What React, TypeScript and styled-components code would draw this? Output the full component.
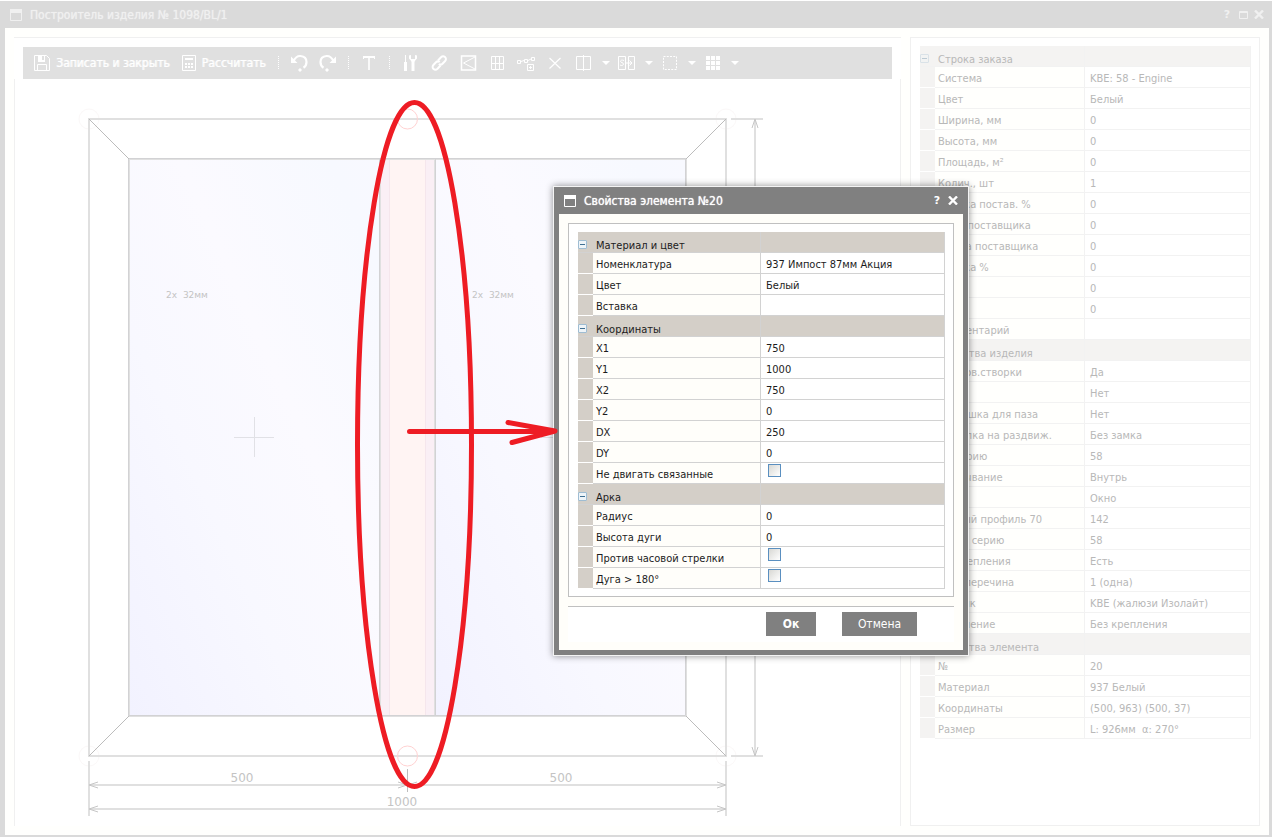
import React from 'react';
import styled, { createGlobalStyle, css } from 'styled-components';

const GlobalStyle = createGlobalStyle`
  *, *::before, *::after { box-sizing: border-box; }
  html, body { margin: 0; padding: 0; background: #fff; }
  body, button, input {
    font-family: "DejaVu Sans Condensed", "DejaVu Sans", sans-serif;
    font-size: 11px;
  }
`;

/* ---------- window chrome ---------- */

const Desktop = styled.div`
  position: relative;
  min-height: 100vh;
  display: flex;
  flex-direction: column;
  padding-top: 1px;
  overflow: hidden;
`;

const MainWindow = styled.section`
  flex: 1;
  display: flex;
  flex-direction: column;
  border: solid #dadada;
  border-width: 0 3px 2px 5px;
`;

const TitleBar = styled.header<{ $faded?: boolean }>`
  display: flex;
  align-items: center;
  height: 27px;
  padding: ${p => (p.$faded ? '0 2px 0 5px' : '0 7px 0 10px')};
  background: ${p => (p.$faded ? '#dadada' : '#808080')};
  color: ${p => (p.$faded ? '#f0f0f0' : '#ffffff')};
`;

const TitleText = styled.h1`
  flex: 1;
  margin: 0 0 0 8px;
  font-size: 12px;
  line-height: 16px;
  font-weight: normal;
  text-shadow: 0 0 1px currentColor;
  white-space: nowrap;
`;

const WindowButton = styled.button`
  display: flex;
  align-items: center;
  justify-content: center;
  width: 16px;
  height: 16px;
  padding: 0;
  border: 0;
  background: none;
  color: inherit;
  font-family: "DejaVu Sans", sans-serif;
  font-weight: bold;
  line-height: 16px;
`;

const WindowBody = styled.div`
  flex: 1;
  display: grid;
  grid-template-columns: minmax(0, 1fr) 350px;
  gap: 9px;
  padding: 9px;
  background: #fffffd;
`;

const Editor = styled.main`
  display: flex;
  flex-direction: column;
  border-top: 1px solid #f0f0f0;
  background: #fff;
`;

const Sheet = styled.div`
  flex: 1;
  border: solid #f0f0f0;
  border-width: 0 1px;
  overflow: hidden;
  svg { display: block; }
`;

const SidePanel = styled.aside`
  border: 1px solid #f0f0f0;
  padding: 8px 8px 8px 9px;
  background: #fff;
`;

/* ---------- toolbar ---------- */

const Toolbar = styled.div`
  display: flex;
  align-items: center;
  height: 32px;
  margin: 9px 9px 0;
  padding: 0 6px;
  background: #e0e0e0;
  color: #fff;
`;

const TextTool = styled.button`
  display: flex;
  align-items: center;
  gap: 6px;
  height: 24px;
  padding: 0 7px 0 5px;
  border: 0;
  background: none;
  color: inherit;
  font-size: 12px;
  white-space: nowrap;
  text-shadow: 1px 0 0 rgba(255, 255, 255, 0.7);
`;

const IconTool = styled.button<{ $narrow?: boolean }>`
  display: flex;
  align-items: center;
  justify-content: center;
  flex: none;
  width: ${p => (p.$narrow ? 14 : 29)}px;
  height: 24px;
  padding: 0;
  border: 0;
  background: none;
  color: inherit;
`;

const Separator = styled.span`
  flex: none;
  width: 12px;
  &::before {
    content: "";
    display: block;
    width: 1px;
    height: 14px;
    margin-left: 5px;
    background: repeating-linear-gradient(#fff 0 1px, #e0e0e0 1px 2px);
  }
`;

/* ---------- property grid ---------- */

type Tone = 'faded' | 'normal';
const tones = {
  faded: { line: '#f2f2f2', group: '#f4f3f2', label: '#fffffd', text: '#b8b8b8' },
  normal: { line: '#d2d2d2', group: '#d4cfc8', label: '#fffefa', text: '#1c1c1c' },
};

const Grid = styled.table<{ $tone: Tone }>`
  width: 100%;
  table-layout: fixed;
  border-collapse: separate;
  border-spacing: 0;
  line-height: 13px;
  color: ${p => tones[p.$tone].text};
  --line: ${p => tones[p.$tone].line};
  --group: ${p => tones[p.$tone].group};
  --label: ${p => tones[p.$tone].label};
`;

const GutterCol = styled.col`width: 15px;`;
const LabelCol = styled.col<{ $width: number }>`width: ${p => p.$width}px;`;

const cell = css`
  height: 21px;
  padding: 2px 0 0;
  text-align: left;
  font-weight: normal;
  white-space: nowrap;
  overflow: hidden;
  border-bottom: 1px solid var(--line);
`;

const Gutter = styled.td`
  ${cell}
  background: var(--group);
  border-bottom-color: #fff;
`;

const Label = styled.th`
  ${cell}
  padding-left: 3px;
  background: var(--label);
  border-right: 1px solid var(--line);
`;

const Value = styled.td`
  ${cell}
  padding-left: 5px;
  border-right: 1px solid var(--line);
`;

const GroupCell = styled.th`
  ${cell}
  padding: 7px 0 0 3px;
  background: var(--group);
  border-right: 1px solid var(--line);
`;

const GroupToggleCell = styled.td`
  ${cell}
  padding-top: 5px;
  background: var(--group);
`;

const Toggle = styled.button<{ $tone: Tone }>`
  display: block;
  width: 9px;
  height: 9px;
  padding: 0;
  border: 1px solid #9fbdd3;
  border-radius: 1px;
  background: #eef4f8;
  opacity: ${p => (p.$tone === 'faded' ? 0.3 : 1)};
  &::before {
    content: "";
    display: block;
    width: 5px;
    height: 1px;
    margin: 0 auto;
    background: #3f6f92;
  }
`;

const Tick = styled.input`
  appearance: none;
  display: block;
  width: 13px;
  height: 13px;
  margin: 0 0 5px 2px;
  border: 1px solid #5a8fc0;
  background: linear-gradient(135deg, #d8d8d4, #ffffff);
`;

type Row = { label: string; value?: string; tick?: boolean };
type Group = { title: string; rows: Row[] };

function PropertyGrid({ groups, tone, labelWidth }: { groups: Group[]; tone: Tone; labelWidth: number }) {
  return (
    <Grid $tone={tone}>
      <colgroup>
        <GutterCol />
        <LabelCol $width={labelWidth} />
        <col />
      </colgroup>
      {groups.map((g, gi) => (
        <tbody key={g.title}>
          <tr>
            <GroupToggleCell>
              <Toggle $tone={tone} type="button" aria-label={`Свернуть: ${g.title}`} />
            </GroupToggleCell>
            <GroupCell scope="rowgroup">{g.title}</GroupCell>
            <GroupCell as="td" />
          </tr>
          {g.rows.map((r, i) => {
            const id = `${tone}-${gi}-${i}`;
            return (
              <tr key={id}>
                <Gutter />
                <Label scope="row">{r.tick ? <label htmlFor={id}>{r.label}</label> : r.label}</Label>
                {r.tick ? (
                  <TickCell><Tick type="checkbox" id={id} /></TickCell>
                ) : (
                  <Value>{r.value}</Value>
                )}
              </tr>
            );
          })}
        </tbody>
      ))}
    </Grid>
  );
}

const TickCell = styled(Value)`
  padding-top: 0;
`;

const orderGroups: Group[] = [
  {
    title: 'Строка заказа',
    rows: [
      { label: 'Система', value: 'KBE: 58 - Engine' },
      { label: 'Цвет', value: 'Белый' },
      { label: 'Ширина, мм', value: '0' },
      { label: 'Высота, мм', value: '0' },
      { label: 'Площадь, м²', value: '0' },
      { label: 'Колич., шт', value: '1' },
      { label: 'Скидка постав. %', value: '0' },
      { label: 'Цена поставщика', value: '0' },
      { label: 'Сумма поставщика', value: '0' },
      { label: 'Скидка %', value: '0' },
      { label: 'Цена', value: '0' },
      { label: 'Итог', value: '0' },
      { label: 'Комментарий', value: '' },
    ],
  },
  {
    title: 'Свойства изделия',
    rows: [
      { label: 'Микров.створки', value: 'Да' },
      { label: 'Паз', value: 'Нет' },
      { label: 'Заглушка для паза', value: 'Нет' },
      { label: 'Защелка на раздвиж.', value: 'Без замка' },
      { label: 'На серию', value: '58' },
      { label: 'Открывание', value: 'Внутрь' },
      { label: 'Тип', value: 'Окно' },
      { label: 'Старый профиль 70', value: '142' },
      { label: 'Через серию', value: '58' },
      { label: 'На крепления', value: 'Есть' },
      { label: 'Есть перечина', value: '1 (одна)' },
      { label: 'Датчик', value: 'KBE (жалюзи Изолайт)' },
      { label: 'Крепление', value: 'Без крепления' },
    ],
  },
  {
    title: 'Свойства элемента',
    rows: [
      { label: '№', value: '20' },
      { label: 'Материал', value: '937 Белый' },
      { label: 'Координаты', value: '(500, 963) (500, 37)' },
      { label: 'Размер', value: 'L: 926мм \u00a0α: 270°' },
    ],
  },
];

const elementGroups: Group[] = [
  {
    title: 'Материал и цвет',
    rows: [
      { label: 'Номенклатура', value: '937 Импост 87мм Акция' },
      { label: 'Цвет', value: 'Белый' },
      { label: 'Вставка', value: '' },
    ],
  },
  {
    title: 'Координаты',
    rows: [
      { label: 'X1', value: '750' },
      { label: 'Y1', value: '1000' },
      { label: 'X2', value: '750' },
      { label: 'Y2', value: '0' },
      { label: 'DX', value: '250' },
      { label: 'DY', value: '0' },
      { label: 'Не двигать связанные', tick: true },
    ],
  },
  {
    title: 'Арка',
    rows: [
      { label: 'Радиус', value: '0' },
      { label: 'Высота дуги', value: '0' },
      { label: 'Против часовой стрелки', tick: true },
      { label: 'Дуга > 180°', tick: true },
    ],
  },
];

/* ---------- dialog ---------- */

const Dialog = styled.section`
  position: absolute;
  left: 553px;
  top: 186px;
  width: 416px;
  border: 1px solid #f4f4f4;
  background: #808080;
  box-shadow: 0 0 7px rgba(0, 0, 0, 0.45);
`;

const DialogBody = styled.div`
  margin: 0 5px 5px;
  padding: 9px 9px 8px;
  background: #fffefa;
`;

const DialogPanel = styled.div`
  padding: 8px 8px 7px 9px;
  border: 1px solid #c0c0c0;
  background: #fff;
`;

const DialogFooter = styled.footer`
  display: flex;
  justify-content: flex-end;
  gap: 26px;
  margin-top: 9px;
  padding: 5px 37px 6px 0;
  border-top: 1px solid #c0c0c0;
  background: #fff;
`;

const DialogButton = styled.button<{ $primary?: boolean }>`
  width: ${p => (p.$primary ? 50 : 75)}px;
  height: 24px;
  padding: 0;
  border: 0;
  background: #808080;
  color: #fff;
  font-size: 12px;
  font-weight: ${p => (p.$primary ? 'bold' : 'normal')};
`;

const Annotation = styled.svg`
  position: absolute;
  left: 350px;
  top: 95px;
  pointer-events: none;
`;

/* ---------- icons ---------- */

const WindowIcon = () => (
  <svg width="12" height="12" viewBox="0 0 12 12" aria-hidden="true">
    <path d="M.5 .5h11v11H.5z" fill="none" stroke="currentColor" />
    <path d="M0 0h12v4H0z" fill="currentColor" />
  </svg>
);

const CloseIcon = () => (
  <svg width="10" height="9" viewBox="0 0 10 9" aria-hidden="true">
    <path d="M1 .5l8 8M9 .5l-8 8" stroke="currentColor" strokeWidth="2.4" fill="none" />
  </svg>
);

const MaximizeIcon = () => (
  <svg width="9" height="8" viewBox="0 0 9 8" aria-hidden="true">
    <path d="M.5 .5h8v7h-8zM0 1.5h9" stroke="currentColor" fill="none" />
  </svg>
);

const SaveIcon = () => (
  <svg width="16" height="16" viewBox="0 0 16 16" aria-hidden="true" fill="none" stroke="currentColor">
    <path d="M.5 .5h12l3 3v12H.5z" />
    <path d="M3.5 15.5v-6h9v6" />
    <path d="M4 1h7v6H4z" fill="currentColor" stroke="none" />
    <path d="M8 1h2v4H8z" fill="#e0e0e0" stroke="none" />
  </svg>
);

const CalcIcon = () => (
  <svg width="14" height="16" viewBox="0 0 14 16" aria-hidden="true">
    <path d="M.5 .5h13v15H.5z" fill="none" stroke="currentColor" />
    <path d="M3 3h8v2H3zM3 8h2v2H3zM6 8h2v2H6zM9 8h2v2H9zM3 11h2v2H3zM6 11h2v2H6zM9 11h2v2H9z" fill="currentColor" />
  </svg>
);

const Icon = ({ children }: { children: React.ReactNode }) => (
  <svg width="21" height="20" viewBox="0 0 21 20" fill="none" stroke="currentColor" aria-hidden="true">
    {children}
  </svg>
);

const Undo = () => (
  <Icon>
    <path d="M4.500 8C6.500 4 9 2.800 11.500 3c4 .3 6 3 6 6 0 2.500-1 4.500-3 5.700" strokeWidth="2.200" />
    <path d="M2 3.500V10h6.500z" fill="currentColor" stroke="none" />
    <path d="M11 15l2 2-2 2-2-2z" fill="currentColor" stroke="none" />
  </Icon>
);
const Redo = () => (
  <Icon>
    <path d="M15.500 8C13.500 4 11 2.800 8.500 3c-4 .3-6 3-6 6 0 2.500 1 4.500 3 5.700" strokeWidth="2.200" />
    <path d="M18 3.500V10h-6.500z" fill="currentColor" stroke="none" />
    <path d="M9 15l2 2-2 2-2-2z" fill="currentColor" stroke="none" />
  </Icon>
);
const TextIcon = () => (
  <Icon>
    <path d="M4 4h12" strokeWidth="2" />
    <path d="M10 4v13" strokeWidth="1.600" />
    <path d="M4.500 3v3M15.500 3v3" />
  </Icon>
);
const Tools = () => (
  <Icon>
    <path d="M5.500 2v8" />
    <path d="M5.500 9v9" strokeWidth="3" />
    <path d="M13 8v10" strokeWidth="3" />
    <path d="M9 2.500v3L12 9h2l3-3.500v-3l-2-.5v4h-4V2z" fill="currentColor" stroke="none" />
  </Icon>
);
const LinkIcon = () => (
  <Icon>
    <path d="M9 7.500l3-3.200c1.200-1.200 2.800-1.300 4-.3s1.200 2.800.1 4l-2.600 2.700c-1.100 1.100-2.600 1.100-3.700.3" strokeWidth="2" />
    <path d="M11.500 12.500l-3 3.200c-1.200 1.200-2.800 1.300-4 .3s-1.200-2.800-.1-4L7 9.300c1.100-1.100 2.600-1.100 3.700-.3" strokeWidth="2" />
  </Icon>
);
const Sash = () => (
  <Icon>
    <path d="M3.500 3h14v14h-14z" strokeWidth="1.500" />
    <path d="M17 4L5.500 10 17 16" />
  </Icon>
);
const Layout = () => (
  <Icon>
    <path d="M4.500 3.500h12v13h-12zM8.500 4v12M12.500 4v12M4 10.500h12" />
  </Icon>
);
const Nodes = () => (
  <Icon>
    <path d="M1.500 7.500h3v3h-3zM8.500 6.500h3v3h-3zM15.500 4.500h3v3h-3zM5 8.500L8 7.500M12 7.500l3-1.500" />
    <path d="M11.500 11.500h6v6h-6zM14.500 13v3M13 14.500h3" />
  </Icon>
);
const Cross = () => (
  <Icon>
    <path d="M4.500 5l11 10.500M15.500 5l-11 10.500" strokeWidth="1.200" />
  </Icon>
);
const Split = () => (
  <Icon>
    <path d="M2.500 3.500h14v13h-14zM9.500 2v16" />
  </Icon>
);
const Merge = () => (
  <Icon>
    <path d="M1.500 3.500h7v13h-7zM11.500 3.500h6v13h-6z" />
    <path d="M7 7.500C4.500 6.500 3.500 7.500 3.500 8.500s3 1 3 2.500-2 2-3.500 1M8 10h7M12.500 7.500l2.500 2.500-2.500 2.500" />
  </Icon>
);
const Marquee = () => (
  <Icon>
    <path d="M3.500 3.500h13v13h-13z" strokeDasharray="2 1.250" />
  </Icon>
);
const Tiles = () => (
  <Icon>
    <path d="M3 3h4v4H3zM8 3h4v4H8zM13 3h4v4h-4zM3 8h4v4H3zM8 8h4v4H8zM13 8h4v4h-4zM3 13h4v4H3zM8 13h4v4H8zM13 13h4v4h-4z" fill="currentColor" stroke="none" />
  </Icon>
);
const Caret = () => (
  <svg width="8" height="4" viewBox="0 0 8 4" aria-hidden="true">
    <path d="M0 0h8L4 4z" fill="currentColor" />
  </svg>
);

const plainTools = [
  ['Инструменты', Tools],
  ['Связь', LinkIcon],
  ['Створка', Sash],
  ['Раскладка', Layout],
  ['Узлы', Nodes],
  ['Удалить', Cross],
] as const;

const menuTools = [
  ['Разделить', Split],
  ['Объединить', Merge],
  ['Выделить', Marquee],
  ['Сетка', Tiles],
] as const;

/* ---------- drawing ---------- */

const Drawing = () => (
  <svg width="885" height="745" viewBox="15 79 885 745" role="img" aria-label="Чертёж изделия" fill="none">
    <defs>
      <linearGradient id="glass" x1="0" y1="1" x2="1" y2="0">
        <stop offset="0" stopColor="#f2f2ff" />
        <stop offset="0.35" stopColor="#f8f8ff" />
        <stop offset="0.6" stopColor="#fbfaff" />
        <stop offset="0.9" stopColor="#f7f9ff" />
        <stop offset="1" stopColor="#f8f9ff" />
      </linearGradient>
    </defs>
    <rect x="129" y="159" width="251" height="557" fill="url(#glass)" />
    <rect x="435" y="159" width="251" height="557" fill="url(#glass)" />
    <rect x="380" y="159" width="55" height="557" fill="#faeff5" />
    <rect x="390" y="159" width="35" height="557" fill="#fff4f3" />
    <path d="M389.500 160v556M425.500 160v556" stroke="#f5e6ec" />
    <g stroke="#fbf8f8">
      <circle cx="89" cy="119" r="10" />
      <circle cx="726" cy="119" r="10" />
      <circle cx="89" cy="756" r="10" />
      <circle cx="726" cy="756" r="10" />
    </g>
    <g stroke="#e0e0e0" strokeWidth="2">
      <rect x="89" y="119" width="637" height="637" />
      <rect x="129" y="159" width="557" height="557" />
      <path d="M380 159v557M435 159v557" />
      <path d="M731 119h32M731 756h32M755 119v637" />
      <path d="M89 761v55M726 761v55M89 785h637M89 809h637" />
    </g>
    <path d="M128.500 158.500h557v557h-557zM435.500 159v557M379.500 159v557" stroke="#d2d2d4" />
    <path d="M89 119l40 40M726 119l-40 40M89 756l40-40M726 756l-40-40" stroke="#bcbcbc" />
    <path d="M407.500 769v23" stroke="#bdbdbd" />
    <path
      d="M98 782l-9 3 9 3M398 782l9 3-9 3M417 782l-9 3 9 3M717 782l9 3-9 3M98 806l-9 3 9 3M717 806l9 3-9 3M752 128l3-9 3 9M752 747l3 9 3-9"
      stroke="#c6c6c6"
    />
    <path d="M234 437.500h40M254.500 417v40M541 437.500h40M561.500 417v40" stroke="#e1e1e6" />
    <g stroke="#ffd2d2">
      <circle cx="407.500" cy="119" r="10" />
      <circle cx="407.500" cy="756" r="10" />
    </g>
    <g fill="#c4c4c4" fontFamily='"DejaVu Sans", sans-serif' fontSize="12" textAnchor="middle">
      <text x="242" y="782">500</text>
      <text x="561" y="782">500</text>
      <text x="402" y="806">1000</text>
      <text x="187" y="298" fontSize="9">2x{'\u00a0\u00a0'}32мм</text>
      <text x="493" y="298" fontSize="9">2x{'\u00a0\u00a0'}32мм</text>
    </g>
  </svg>
);

export default function App() {
  return (
    <>
      <GlobalStyle />
      <Desktop>
        <MainWindow>
          <TitleBar $faded>
            <WindowIcon />
            <TitleText>Построитель изделия № 1098/BL/1</TitleText>
            <WindowButton type="button" aria-label="Справка">?</WindowButton>
            <WindowButton type="button" aria-label="Развернуть"><MaximizeIcon /></WindowButton>
            <WindowButton type="button" aria-label="Закрыть"><CloseIcon /></WindowButton>
          </TitleBar>
          <WindowBody>
            <Editor>
              <Toolbar role="toolbar">
                <TextTool type="button"><SaveIcon />Записать и закрыть</TextTool>
                <TextTool type="button"><CalcIcon />Рассчитать</TextTool>
                <Separator />
                <IconTool type="button" aria-label="Отменить"><Undo /></IconTool>
                <IconTool type="button" aria-label="Вернуть"><Redo /></IconTool>
                <Separator />
                <IconTool type="button" aria-label="Текст"><TextIcon /></IconTool>
                <Separator />
                {plainTools.map(([name, Glyph]) => (
                  <IconTool key={name} type="button" aria-label={name}><Glyph /></IconTool>
                ))}
                {menuTools.map(([name, Glyph]) => (
                  <React.Fragment key={name}>
                    <IconTool type="button" aria-label={name}><Glyph /></IconTool>
                    <IconTool $narrow type="button" aria-label={`${name}: меню`}><Caret /></IconTool>
                  </React.Fragment>
                ))}
              </Toolbar>
              <Sheet><Drawing /></Sheet>
            </Editor>
            <SidePanel>
              <PropertyGrid groups={orderGroups} tone="faded" labelWidth={150} />
            </SidePanel>
          </WindowBody>
        </MainWindow>

        <Dialog role="dialog" aria-labelledby="element-title">
          <TitleBar>
            <WindowIcon />
            <TitleText as="h2" id="element-title">Свойства элемента №20</TitleText>
            <WindowButton type="button" aria-label="Справка">?</WindowButton>
            <WindowButton type="button" aria-label="Закрыть"><CloseIcon /></WindowButton>
          </TitleBar>
          <DialogBody>
            <DialogPanel>
              <PropertyGrid groups={elementGroups} tone="normal" labelWidth={168} />
            </DialogPanel>
            <DialogFooter>
              <DialogButton type="button" $primary>Ок</DialogButton>
              <DialogButton type="button">Отмена</DialogButton>
            </DialogFooter>
          </DialogBody>
        </Dialog>

        <Annotation width="215" height="700" viewBox="350 95 215 700" aria-hidden="true" fill="none" stroke="#ee1c24" strokeWidth="5" strokeLinecap="round" strokeLinejoin="round">
          <ellipse cx="414.500" cy="444.500" rx="57" ry="342" />
          <path d="M409.500 431.500H553M508 422.500l47 8.500-43 11.500" />
        </Annotation>
      </Desktop>
    </>
  );
}
